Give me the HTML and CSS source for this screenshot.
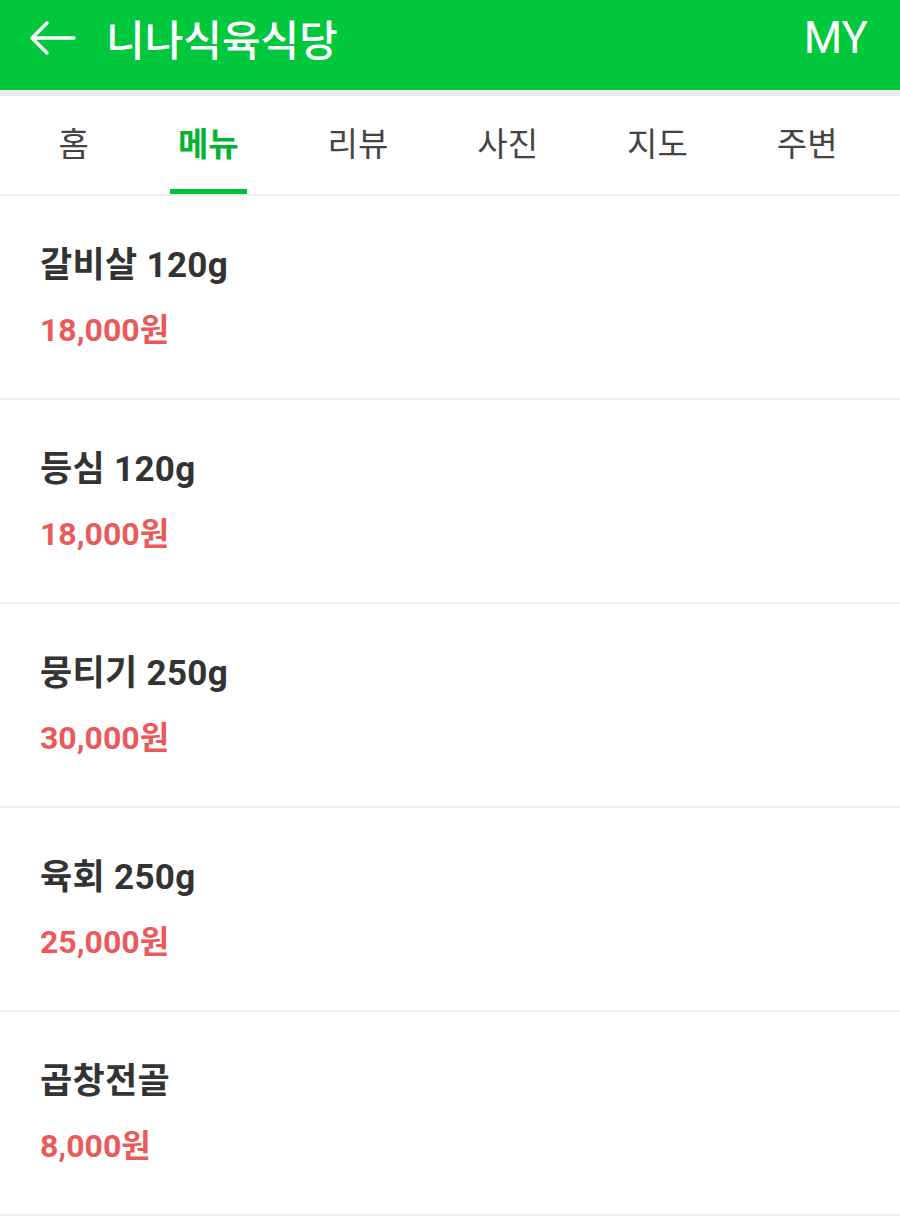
FILE: index.html
```html
<!DOCTYPE html>
<html lang="ko">
<head>
<meta charset="utf-8">
<title>니나식육식당</title>
<link rel="stylesheet" href="styles.css">
</head>
<body>
<header class="appbar">
  <div class="appbar-left">
    <svg class="back" width="48" height="36" viewBox="0 0 48 36" aria-hidden="true">
      <path d="M45 18 H4 M18 3 L3 18 L18 33" fill="none" stroke="#fff" stroke-width="3.4" stroke-linecap="round" stroke-linejoin="round"/>
    </svg>
    <h1 class="title">니나식육식당</h1>
  </div>
  <div class="my">MY</div>
</header>
<nav class="tabs">
  <a class="tab"><span class="tab-label">홈</span></a>
  <a class="tab active"><span class="tab-label">메뉴</span></a>
  <a class="tab"><span class="tab-label">리뷰</span></a>
  <a class="tab"><span class="tab-label">사진</span></a>
  <a class="tab"><span class="tab-label">지도</span></a>
  <a class="tab"><span class="tab-label">주변</span></a>
</nav>
<ul class="menu">
  <li class="item"><div class="name">갈비살 120g</div><div class="price">18,000원</div></li>
  <li class="item"><div class="name">등심 120g</div><div class="price">18,000원</div></li>
  <li class="item"><div class="name">뭉티기 250g</div><div class="price">30,000원</div></li>
  <li class="item"><div class="name">육회 250g</div><div class="price">25,000원</div></li>
  <li class="item"><div class="name">곱창전골</div><div class="price">8,000원</div></li>
</ul>
</body>
</html>
```
FILE: styles.css
```css
* { box-sizing: border-box; }
html, body { margin: 0; padding: 0; background: #fff; }
body {
  font-family: Roboto, "Noto Sans CJK KR", sans-serif;
  color: #333;
  width: 900px;
}
.appbar {
  height: 96px;
  background: #00c73c;
  border-bottom: 6px solid #e6eaed;
  display: flex;
  align-items: center;
  justify-content: space-between;
  padding: 0 32px 14px 29px;
}
.appbar-left { display: flex; align-items: center; }
.back { display: block; margin-right: 29px; }
.title {
  margin: 0;
  font-family: "Noto Sans CJK KR", sans-serif;
  font-size: 42px;
  font-weight: 500;
  color: #fff;
  line-height: 1;
}
.my {
  font-family: Roboto, sans-serif;
  font-size: 44px;
  font-weight: 400;
  color: #fff;
  line-height: 1;
}
.tabs {
  display: flex;
  height: 100px;
  padding: 0 14px;
  border-bottom: 2px solid #eceff1;
}
.tab {
  display: flex;
  padding: 0 36.5px;
  height: 98px;
  font-family: "Noto Sans CJK KR", sans-serif;
  font-size: 33px;
  color: #444;
}
.tab-label {
  display: flex;
  align-items: center;
  padding: 0 8px;
  height: 98px;
  border-bottom: 5px solid transparent;
  line-height: 1;
}
.tab.active { color: #00b531; font-weight: 700; }
.tab.active .tab-label { border-bottom-color: #00c03a; }
.menu { list-style: none; margin: 0; padding: 0; }
.item {
  height: 204px;
  padding: 50px 40px 0;
  border-bottom: 2px solid #eef1f4;
}
.name {
  font-size: 35px;
  font-weight: 700;
  color: #333;
  line-height: 40px;
  letter-spacing: 0.3px;
}
.price {
  margin-top: 26px;
  font-size: 32px;
  font-weight: 700;
  color: #ea5a5a;
  line-height: 36px;
}
```
